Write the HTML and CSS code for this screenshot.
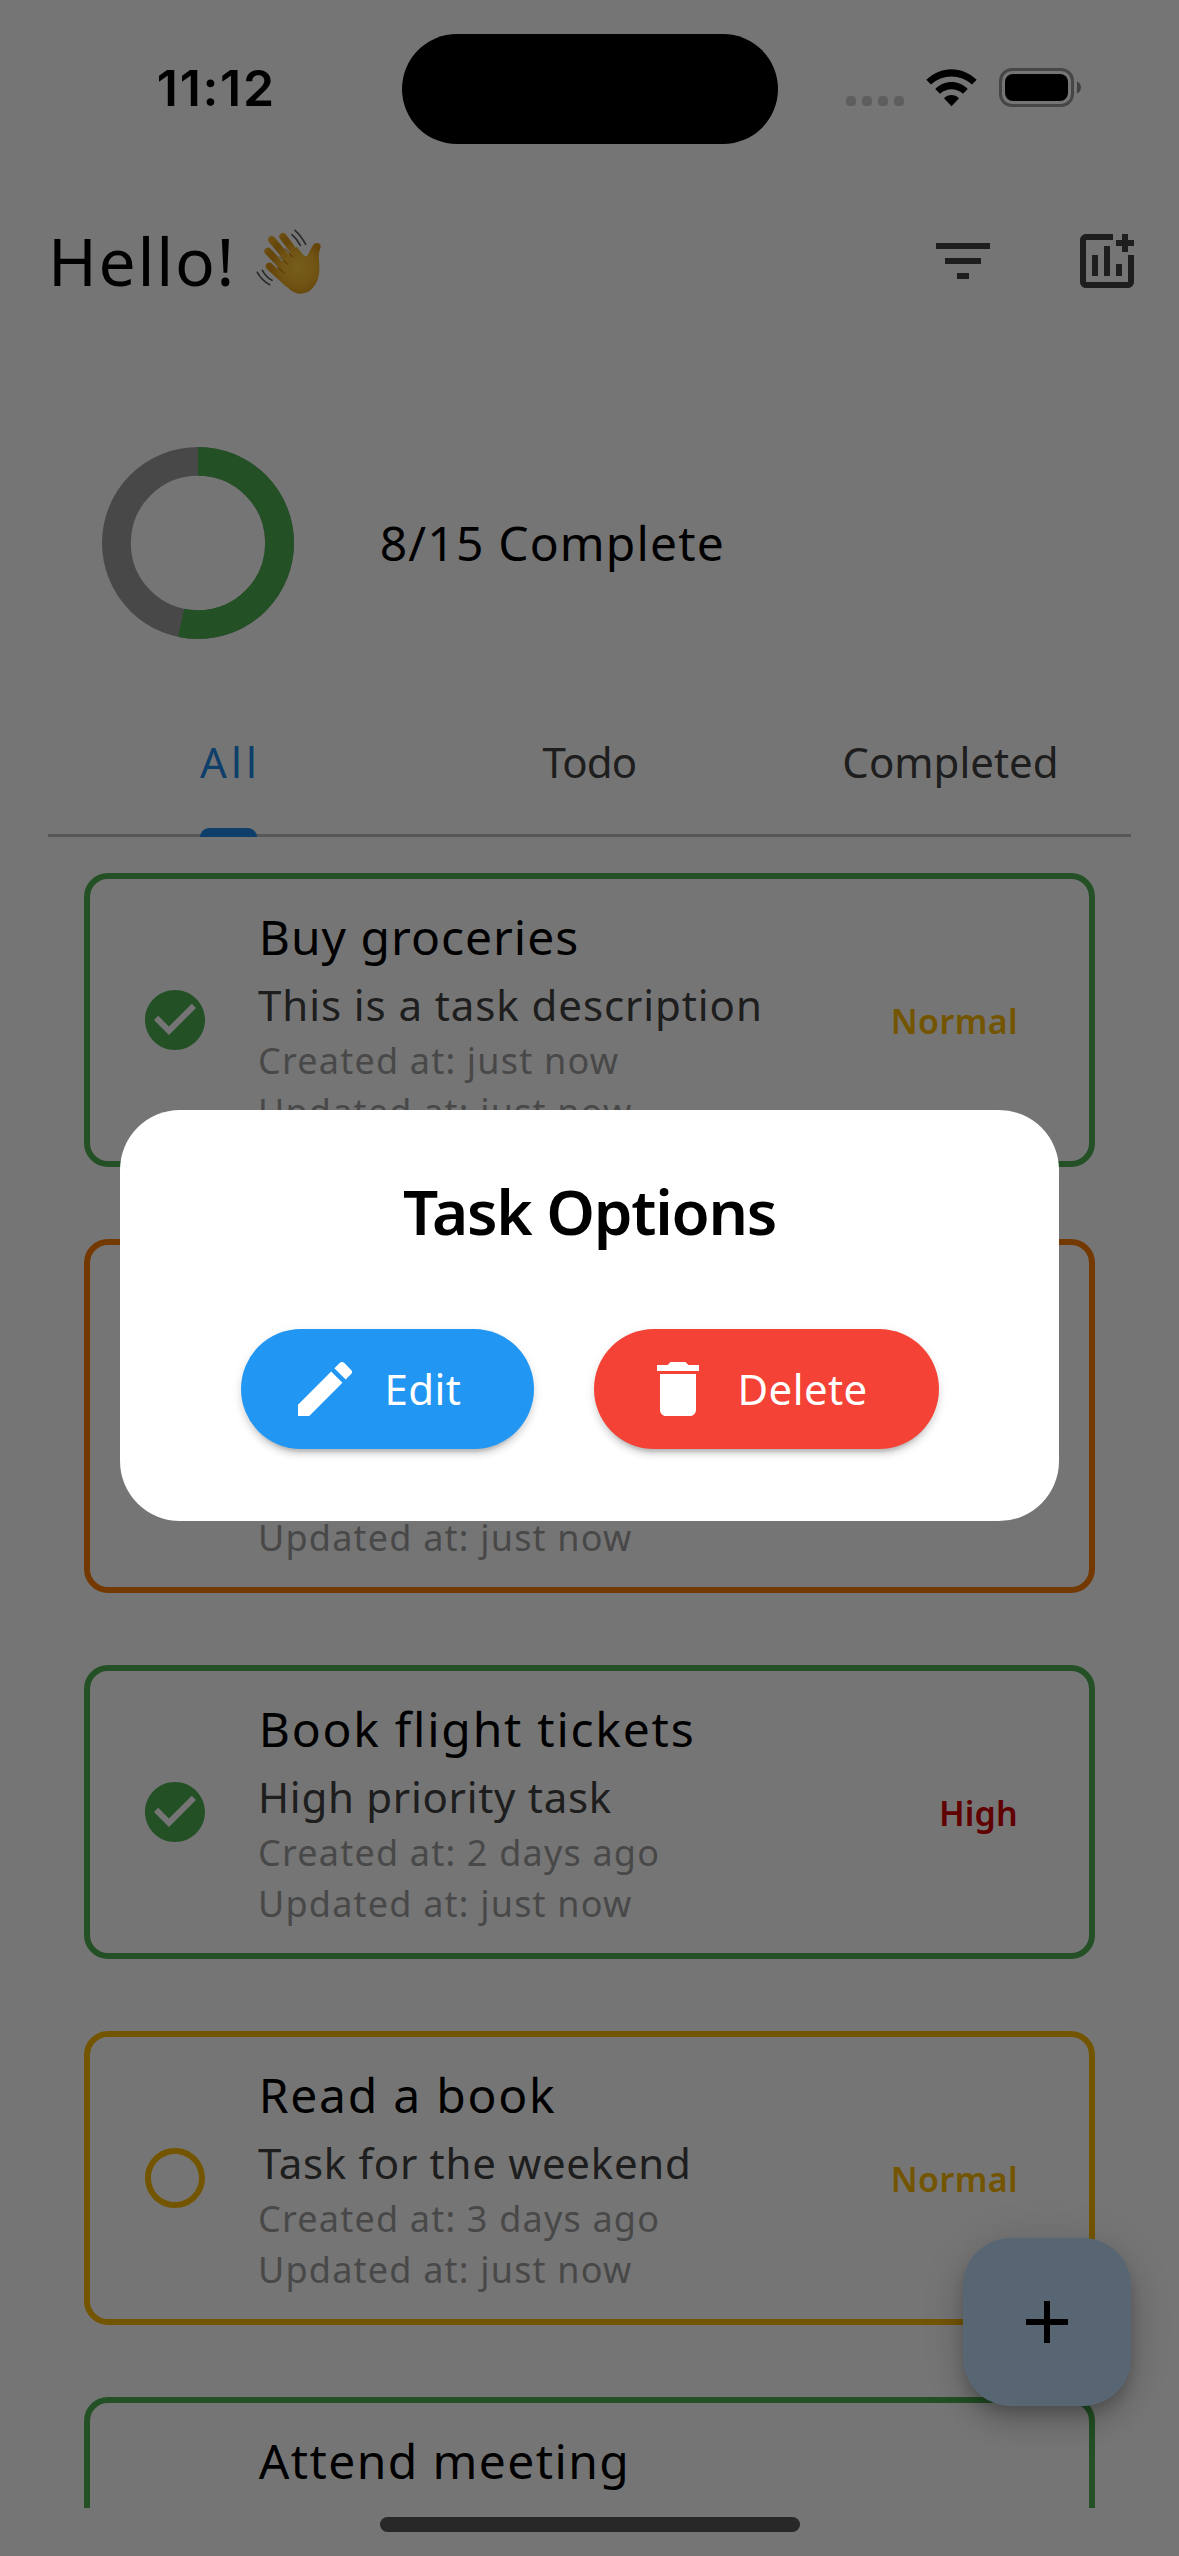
FILE: index.html
```html
<!DOCTYPE html>
<html lang="en">
<head>
<meta charset="utf-8">
<title>Tasks</title>
<link rel="stylesheet" href="styles.css">
</head>
<body>
<svg width="0" height="0" class="defs" aria-hidden="true">
  <symbol id="check" viewBox="0 0 24 24"><path d="M12 2C6.48 2 2 6.48 2 12s4.48 10 10 10 10-4.48 10-10S17.52 2 12 2zm-2 15l-5-5 1.41-1.41L10 14.17l7.59-7.59L19 8l-9 9z"/></symbol>
  <symbol id="circle" viewBox="0 0 24 24"><path d="M12 2C6.48 2 2 6.48 2 12s4.48 10 10 10 10-4.48 10-10S17.52 2 12 2zm0 18c-4.42 0-8-3.58-8-8s3.58-8 8-8 8 3.58 8 8-3.58 8-8 8z"/></symbol>
</svg>
<div class="screen">
  <div class="status">
    <span class="time">11:12</span>
    <div class="island"></div>
    <div class="status-icons">
      <div class="dots"><i></i><i></i><i></i><i></i></div>
      <svg class="wifi" viewBox="0 0 51 38">
        <path d="M0.3 10.8C14.5-3.4 36.500-3.400 50.700 10.800L46 15.600C34.500 4.700 16.500 4.700 5 15.600Z"/>
        <path d="M9.300 20C18.300 10.800 32.700 10.800 41.700 20L37 24.800C30.500 18.700 20.500 18.700 14 24.800Z"/>
        <path d="M18 29.200C22.300 24.900 28.700 24.900 33 29.200L25.500 37.200Z"/>
      </svg>
      <svg class="battery" viewBox="0 0 83 39">
        <rect x="1.500" y="1.500" width="72" height="36" rx="11.500" fill="none" stroke="#000" stroke-opacity=".4" stroke-width="3"/>
        <rect x="6" y="6" width="63" height="27" rx="8"/>
        <path d="M78 13.500c5.300 2 5.300 10 0 12z" fill-opacity=".45"/>
      </svg>
    </div>
  </div>

  <header class="header">
    <h1 class="hello">Hello!</h1>
    <svg class="wave" viewBox="78 84 198 195">
      <defs>
        <radialGradient id="skin" gradientUnits="userSpaceOnUse" cx="205" cy="200" r="125">
          <stop offset="0" stop-color="#ffce3c"/><stop offset=".45" stop-color="#f4b52b"/><stop offset=".68" stop-color="#dc9616"/><stop offset="1" stop-color="#f2b42d"/>
        </radialGradient>
      </defs>
      <path fill="url(#skin)" d="M200 137L218 160Q230 174 236 156L248 134C258 119 278 128 271 141Q265 155 267 180C271 220 264 240 252 256C236 280 205 285 182 268L130 220L150 195L165 170Z"/>
      <path fill="none" stroke="url(#skin)" stroke-width="22" stroke-linecap="round" d="M159 107L205 170M125 116L182 184M114 151L168 208M118 196L172 245"/>
      <path fill="none" stroke="#a86c08" stroke-width="3" stroke-linecap="round" d="M166 143L188 168M150 167L173 190M142 198L163 217"/>
      <path fill="none" stroke="#5c5c5c" stroke-width="5" stroke-linecap="round" d="M195 88Q213 104 227 130M186 101Q200 113 211 133M97 208Q108 228 126 238M82 214Q94 237 119 251"/>
    </svg>
    <div class="actions">
      <svg class="icon" viewBox="0 0 24 24"><path d="M10 18h4v-2h-4v2zM3 6v2h18V6H3zm3 7h12v-2H6v2z"/></svg>
      <svg class="icon" viewBox="0 0 24 24"><path d="M17 3h2v2h2v2h-2v2h-2V7h-2V5h2z"/><path d="M19 19H5V5h9V3H5c-1.100 0-2 .9-2 2v14c0 1.100.9 2 2 2h14c1.100 0 2-.9 2-2v-9h-2v9z"/><path d="M11 7h2v10h-2zM15 13h2v4h-2zM7 10h2v7H7z"/></svg>
    </div>
  </header>

  <section class="stats">
    <svg class="donut" viewBox="0 0 192 192">
      <circle cx="96" cy="96" r="81.600" fill="none" stroke="#9e9e9e" stroke-width="28.800"/>
      <circle cx="96" cy="96" r="81.600" fill="none" stroke="#4caf50" stroke-width="28.800" pathLength="15" stroke-dasharray="8 7" transform="rotate(-90 96 96)"/>
    </svg>
    <span class="summary">8/15 Complete</span>
  </section>

  <nav class="tabs">
    <div class="tab tab--active"><span class="tab-label tab-label--all">All</span></div>
    <div class="tab"><span class="tab-label tab-label--todo">Todo</span></div>
    <div class="tab"><span class="tab-label">Completed</span></div>
  </nav>

  <main class="list">
    <article class="card done">
      <svg class="mark"><use href="#check"/></svg>
      <div class="body">
        <h2 class="title title--snug">Buy groceries</h2>
        <p class="desc desc--wide">This is a task description</p>
        <p class="meta">Created at: just now</p>
        <p class="meta">Updated at: just now</p>
      </div>
      <span class="priority normal">Normal</span>
    </article>
    <article class="card medium card--tall">
      <div class="body body--bottom">
        <p class="meta">Updated at: just now</p>
      </div>
    </article>
    <article class="card done">
      <svg class="mark"><use href="#check"/></svg>
      <div class="body">
        <h2 class="title">Book flight tickets</h2>
        <p class="desc">High priority task</p>
        <p class="meta">Created at: 2 days ago</p>
        <p class="meta">Updated at: just now</p>
      </div>
      <span class="priority high">High</span>
    </article>
    <article class="card open">
      <svg class="mark"><use href="#circle"/></svg>
      <div class="body">
        <h2 class="title">Read a book</h2>
        <p class="desc">Task for the weekend</p>
        <p class="meta">Created at: 3 days ago</p>
        <p class="meta">Updated at: just now</p>
      </div>
      <span class="priority normal">Normal</span>
    </article>
    <article class="card done">
      <div class="body">
        <h2 class="title title--mid">Attend meeting</h2>
      </div>
    </article>
  </main>
  <div class="home"><div class="home-bar"></div></div>

  <div class="fab"><svg class="icon" viewBox="0 0 24 24"><path d="M19 13h-6v6h-2v-6H5v-2h6V5h2v6h6v2z"/></svg></div>

  <div class="overlay">
    <div class="dialog">
      <h2 class="dialog-title">Task Options</h2>
      <div class="buttons">
        <div class="button edit">
          <svg class="icon" viewBox="0 0 24 24"><path d="M3 17.250V21h3.750L17.810 9.940l-3.750-3.750L3 17.250zM20.710 7.040c.39-.39.39-1.020 0-1.410l-2.340-2.340c-.39-.39-1.020-.39-1.410 0l-1.830 1.830 3.750 3.750 1.830-1.830z"/></svg>
          <span>Edit</span>
        </div>
        <div class="button delete">
          <svg class="icon" viewBox="0 0 24 24"><path d="M6 19c0 1.100.9 2 2 2h8c1.100 0 2-.9 2-2V7H6v12zM19 4h-3.500l-1-1h-5l-1 1H5v2h14V4z"/></svg>
          <span>Delete</span>
        </div>
      </div>
    </div>
  </div>
</div>
</body>
</html>
```

FILE: styles.css
```css
* { box-sizing: border-box; }
body { margin: 0; background: #fff; }
h1, h2, p { margin: 0; font-weight: 400; }
.defs { position: absolute; }

.screen {
  position: relative;
  width: 1179px;
  height: 2556px;
  overflow: hidden;
  display: flex;
  flex-direction: column;
  background: #fff;
  color: #000;
  font-family: "Noto Sans", "Open Sans", sans-serif;
}
.icon { width: 72px; height: 72px; display: block; flex: none; fill: currentColor; }

/* Status bar */
.status {
  height: 177px;
  flex: none;
  display: grid;
  grid-template-columns: 401.500px 376px 1fr;
  align-items: start;
}
.time {
  padding: 57px 0 0 156.800px;
  font: 600 50px/62px Inter, sans-serif;
  letter-spacing: 1.700px;
}
.island { height: 110.500px; margin-top: 33.500px; border-radius: 56px; background: #000; }
.status-icons { display: flex; margin: 68px 0 0 68.500px; }
.dots { display: flex; gap: 6px; padding-top: 28px; }
.dots i { width: 10px; height: 10px; border-radius: 4px; background: #cdcdcd; }
.wifi { width: 51px; height: 38px; margin: 1px 0 0 22px; }
.battery { width: 83px; height: 39px; margin-left: 22px; }

/* App bar */
.header {
  height: 168px;
  flex: none;
  display: flex;
  align-items: center;
  padding: 0 36px 0 48px;
}
.hello { font-size: 66px; line-height: 90px; letter-spacing: 1.700px; padding-bottom: 3px; }
.wave { width: 66px; height: 65px; margin-left: 20px; }
.actions { display: flex; gap: 72px; margin-left: auto; color: #424242; }

/* Progress */
.stats { display: flex; align-items: center; gap: 85.700px; padding: 102px 102px 0; }
.donut { width: 192px; height: 192px; flex: none; }
.summary { font-size: 48px; line-height: 66px; letter-spacing: 1.150px; padding-bottom: 1px; }

/* Tabs */
.tabs {
  height: 138px;
  flex: none;
  display: grid;
  grid-template-columns: repeat(3, 1fr);
  margin: 60px 48px 0;
  border-bottom: 3px solid #bdbdbd;
}
.tab {
  display: flex;
  justify-content: center;
  font-size: 42px;
  line-height: 125px;
  color: #424242;
}
.tab-label { position: relative; height: 135px; }
.tab-label--all { padding: 0 0 0 1px; letter-spacing: 4.200px; margin-right: -3px; }
.tab-label--todo { letter-spacing: -.8px; }
.tab--active { color: #2089e8; }
.tab--active .tab-label::after {
  content: "";
  position: absolute;
  left: 1px;
  right: 4px;
  bottom: -3px;
  height: 9px;
  border-radius: 9px 9px 0 0;
  background: #2089e8;
}

/* Task list */
.list {
  height: 1671px;
  flex: none;
  overflow: hidden;
  display: flex;
  flex-direction: column;
  gap: 72px;
  padding: 36px 84px 0;
}
.card {
  height: 294px;
  flex: none;
  display: flex;
  align-items: center;
  border: 6px solid;
  border-radius: 24px;
  padding: 0 71px 0 49px;
}
.card--tall { height: 354px; }
.done { border-color: #4caf50; }
.medium { border-color: #fb7c00; }
.open { border-color: #fbb900; }
.mark { width: 72px; height: 72px; flex: none; fill: #4caf50; }
.open .mark { fill: #fbb900; }
.body { width: 560px; margin-left: 47px; align-self: stretch; padding-top: 21px; }
.card > .body:first-child { margin-left: 119px; }
.body--bottom { display: flex; flex-direction: column; justify-content: flex-end; padding-bottom: 24px; }
.title { padding-left: .7px; font-size: 48px; line-height: 73px; letter-spacing: 1.750px; }
.title--snug { letter-spacing: 1px; }
.title--mid { letter-spacing: 1.400px; }
.desc { margin-top: 2px; font-size: 42px; line-height: 60px; letter-spacing: .72px; color: #424242; }
.desc--wide { letter-spacing: .92px; }
.meta { font-size: 36px; line-height: 51px; letter-spacing: 1.200px; color: #9e9e9e; }
.priority { margin-left: auto; font-size: 34px; font-weight: 600; line-height: 46px; padding-top: 1px; }
.normal { color: #fbb900; letter-spacing: .4px; }
.high { color: #d10000; letter-spacing: .2px; }

/* Home indicator */
.home { flex: 1; display: flex; justify-content: center; align-items: flex-start; padding-top: 9px; }
.home-bar { width: 420px; height: 15px; border-radius: 8px; background: #575757; }

/* Floating action button */
.fab {
  position: absolute;
  right: 48px;
  bottom: 150px;
  width: 168px;
  height: 168px;
  display: grid;
  place-items: center;
  border-radius: 48px;
  background: #bddff9;
  box-shadow: 0 9px 15px -3px rgba(0, 0, 0, .2), 0 18px 30px rgba(0, 0, 0, .14), 0 3px 54px rgba(0, 0, 0, .12);
}

/* Modal */
.overlay {
  position: absolute;
  inset: 0;
  display: flex;
  align-items: center;
  justify-content: center;
  padding: 177px 0 102px;
  background: rgba(0, 0, 0, .54);
}
.dialog {
  width: 939px;
  height: 411px;
  display: flex;
  flex-direction: column;
  align-items: center;
  justify-content: space-between;
  padding: 61px 0 72px;
  border-radius: 60px;
  background: #fff;
}
.dialog-title { font-size: 62px; font-weight: 600; line-height: 81px; letter-spacing: -1.300px; }
.buttons { display: flex; gap: 60px; }
.button {
  height: 120px;
  display: flex;
  align-items: center;
  gap: 24px;
  padding-left: 48px;
  border-radius: 60px;
  color: #fff;
  font-size: 42px;
  letter-spacing: .4px;
  box-shadow: 0 9px 3px -6px rgba(0, 0, 0, .14), 0 6px 6px rgba(0, 0, 0, .1), 0 3px 12px rgba(0, 0, 0, .08);
}
.button span { padding-bottom: 2px; }
.edit { width: 293px; background: #2196f3; }
.delete { width: 345px; background: #f44336; }
```
